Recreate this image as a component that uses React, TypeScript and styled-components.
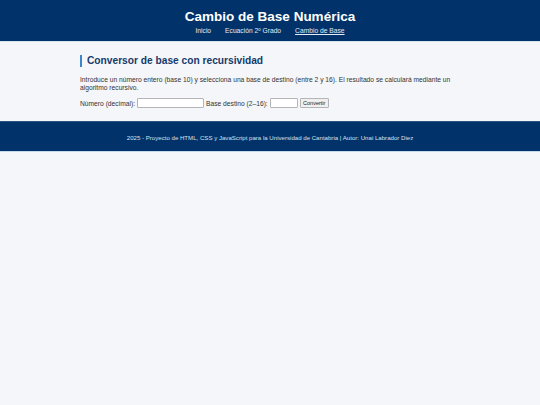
import React from 'react';
import styled, {createGlobalStyle} from "styled-components";

const GlobalStyle = createGlobalStyle`
  html, body {
    margin: 0;
    padding: 0;
    background-color: #f4f6f9;
    font-family: "Liberation Sans", Arial, sans-serif;
    color: #333;
  }
`

export default function App() {
  return (
    <>
      <GlobalStyle/>
      <Header>
        <Title>Cambio de Base Numérica</Title>
        <Nav>
          <NavLink href="#">Inicio</NavLink>
          <NavLink href="#">Ecuación 2º Grado</NavLink>
          <NavLink href="#" $active>Cambio de Base</NavLink>
        </Nav>
      </Header>
      <Main>
        <Heading>Conversor de base con recursividad</Heading>
        <Intro>
          Introduce un número entero (base 10) y selecciona una base de destino (entre 2 y 16). El resultado se
          calculará mediante un algoritmo recursivo.
        </Intro>
        <Form onSubmit={e => e.preventDefault()}>
          <Label htmlFor="numero">Número (decimal):</Label>
          <Input id="numero" type="text" $width={67}/>
          <Label htmlFor="base">Base destino (2–16):</Label>
          <Input id="base" type="text" $width={28}/>
          <Button type="submit">Convertir</Button>
        </Form>
      </Main>
      <Footer>
        2025 - Proyecto de HTML, CSS y JavaScript para la Universidad de Cantabria | Autor: Unai Labrador Diez
      </Footer>
    </>
  );
}

const Header = styled.header`
  background-color: #01336a;
  border-bottom: 1px solid #d6e4f2;
  text-align: center;
  padding: 9px 0 5px;
  height: 27px;
`
const Title = styled.h1`
  margin: 0;
  color: #fff;
  font-size: 13.5px;
  line-height: 16px;
  font-weight: bold;
`
const Nav = styled.nav`
  display: flex;
  justify-content: center;
  gap: 14px;
  margin-top: 1px;
`
const NavLink = styled.a<{ $active?: boolean }>`
  color: #e4ecf5;
  font-size: 6.7px;
  line-height: 9px;
  text-decoration: ${p => p.$active ? "underline" : "none"};
`
const Main = styled.main`
  width: 380px;
  margin: 0 auto;
  padding: 13px 0 13px;
`
const Heading = styled.h2`
  margin: 0 0 8px;
  padding-left: 5px;
  border-left: 2px solid #3a86c8;
  color: #163a6b;
  font-size: 10.2px;
  line-height: 12px;
  font-weight: bold;
`
const Intro = styled.p`
  margin: 0 0 6px;
  padding-top: 1px;
  font-size: 6.7px;
  line-height: 8px;
  color: #333;
`
const Form = styled.form`
  display: flex;
  align-items: center;
  gap: 2px;
`
const Label = styled.label`
  font-size: 6.7px;
  color: #333;
`
const Input = styled.input<{ $width: number }>`
  width: ${p => p.$width}px;
  height: 10px;
  box-sizing: border-box;
  padding: 0;
  border: 1px solid #b5b5b5;
  border-radius: 1px;
  background: #fff;
  font-size: 6px;
`
const Button = styled.button`
  width: 29px;
  height: 10px;
  padding: 0;
  box-sizing: border-box;
  border: 1px solid #b5b5b5;
  border-radius: 1px;
  background: #efefef;
  font-family: "Liberation Sans", Arial, sans-serif;
  font-size: 5.5px;
  line-height: 7px;
  color: #222;
`
const Footer = styled.footer`
  background-color: #01336a;
  border-top: 1px solid #2b5580;
  border-bottom: 1px solid #c5d9ec;
  color: #d3e1f0;
  text-align: center;
  font-size: 6.1px;
  line-height: 8px;
  height: 31px;
  box-sizing: border-box;
  padding: 11.5px 0;
`
